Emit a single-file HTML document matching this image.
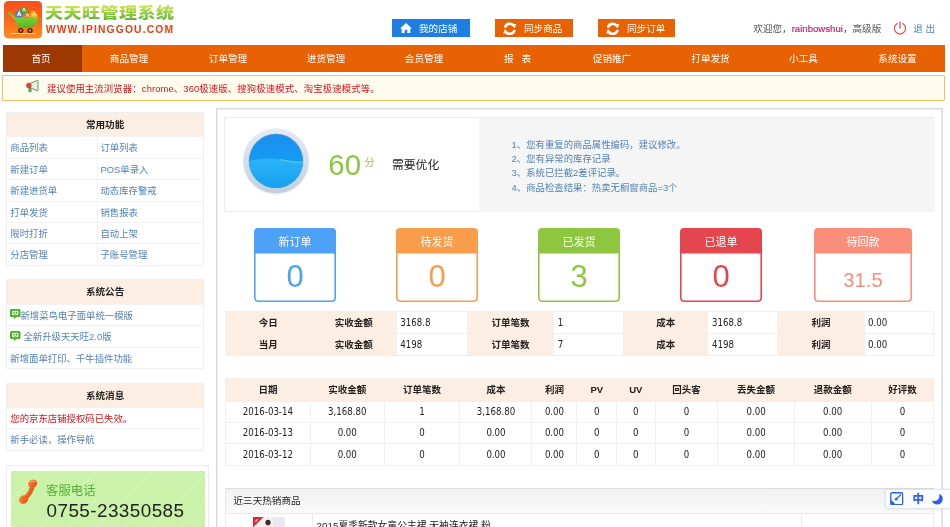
<!DOCTYPE html>
<html lang="zh-CN">
<head>
<meta charset="utf-8">
<title>天天旺管理系统</title>
<style>
*{box-sizing:border-box;margin:0;padding:0}
html,body{width:950px;height:527px;overflow:hidden;background:#fff}
body{position:relative;will-change:transform;font-family:"Liberation Sans","Noto Sans CJK SC",sans-serif;font-size:9.4px;color:#333;line-height:1}
.abs{position:absolute}
a{text-decoration:none;color:inherit}
/* header */
#logo{left:4px;top:1px}
#t1{left:45.3px;top:4px;font-size:15px;font-weight:900;color:#7cc242;letter-spacing:0.4px;transform:scaleX(1.2);transform-origin:0 0;white-space:nowrap;line-height:18px;background:linear-gradient(#c4e552 15%,#5ab52a 90%);-webkit-background-clip:text;background-clip:text;-webkit-text-fill-color:transparent}
#t2{left:45.8px;top:24.3px;font-size:10.3px;font-weight:bold;color:#ee3d10;letter-spacing:1.16px;white-space:nowrap;line-height:12px}
.btn{top:19px;height:18px;color:#fff;font-size:9.6px;line-height:19.2px;overflow:hidden;white-space:nowrap}
.btn svg{position:absolute}
.btn span{position:absolute;top:0}
#b1{left:392px;width:78px;background:#1c7ee0}
#b2{left:495px;width:77.6px;background:#e86203}
#b3{left:598px;width:77.4px;background:#e86203}
#user{left:753.3px;top:23px;font-size:9.6px;line-height:12px;color:#555;white-space:nowrap;letter-spacing:0}
#user b{font-weight:normal;color:#c8246c;-webkit-text-stroke:0.2px #c8246c}
#exit{left:913.2px;top:23px;font-size:9.6px;line-height:12px;color:#4a86b8;white-space:nowrap;letter-spacing:0}
/* nav */
#nav{left:3px;top:45.4px;width:942px;height:26.6px;background:#e86203}
#nav .on{position:absolute;left:0;top:0;width:78.5px;height:27px;background:#9d3803}
#nav span{position:absolute;top:0;height:27px;line-height:28px;color:#fff;font-size:9.6px;white-space:nowrap;transform:translateX(-50%)}
#notice{left:2.3px;top:74.8px;width:943px;height:26.2px;background:#fffcee;border:1.5px solid #ecc35f;border-radius:1px}
#notice span{position:absolute;left:43.6px;top:0;line-height:25.6px;letter-spacing:0.12px;font-size:9.4px;color:#d8141c;white-space:nowrap}
/* sidebar */
.sb{left:5.8px;width:198.6px;border:1px solid #efefef;background:#fff}
.sb .h{height:23.4px;line-height:23.6px;background:#fdeee3;text-align:center;font-weight:bold;color:#222;font-size:9.6px}
.sb .r{height:21.4px;line-height:21.6px;border-top:1px solid #f2f2f2;color:#5383b6;white-space:nowrap;position:relative}
.sb .r span{position:absolute;top:0;left:3.5px}
.sb .r i+span{left:93.7px}
.sb .r i{position:absolute;left:90.2px;top:0;width:1px;height:100%;background:#f0f0f0}

/* main */
#main{left:216px;top:108px;width:726.8px;height:440px;box-shadow:inset 0 0 0 1.6px #dbdbdb;background:#fff}
#score{left:224.4px;top:117.3px;width:710.3px;height:94.6px;border:1px solid #ebebeb;background:#fff}
#tips{left:479px;top:117.6px;width:455.5px;height:94.2px;background:#f5f5f5}
#tips p{position:absolute;left:32.6px;white-space:nowrap;color:#5383b6;font-size:9.4px;line-height:14px}
#ball{left:242px;top:128px;width:68px;height:68px}
#n60{left:328.3px;top:147.5px;font-size:29.4px;line-height:34px;color:#8cc63f;white-space:nowrap}
#fen{left:364.5px;top:156px;font-size:10px;line-height:14px;color:#8cc63f}
#need{left:392px;top:158px;font-size:11.8px;line-height:14px;color:#222;white-space:nowrap}
.card{top:228px;width:82px;height:74.3px;border-radius:4px;overflow:hidden;background:#fff}
.card .ch{position:absolute;left:0;top:0;width:100%;height:24.5px;line-height:29.6px;overflow:hidden;text-align:center;color:#fff;font-size:11px}
.card .cb{position:absolute;left:0;top:24px;width:100%;bottom:0;border-radius:0 0 4px 4px;text-align:center;font-size:31px;line-height:50px}

/* tables */
.tb{border-collapse:collapse;table-layout:fixed;font-size:9.8px;color:#222}
.tb th,.tb .l{font-size:9.5px}
.tb td{font-family:"DejaVu Sans Condensed","DejaVu Sans","Liberation Sans","Noto Sans CJK SC",sans-serif;font-stretch:condensed;font-size:9.6px}
.tb td.l{font-family:"Liberation Sans","Noto Sans CJK SC",sans-serif;font-stretch:normal;font-size:9.5px}
.tb td,.tb th{border:1px solid #f0f0f0;padding:0;overflow:hidden;white-space:nowrap;font-weight:normal}
#t_a{left:224.7px;top:311px;width:708.6px}
#t_a td{height:21.7px;line-height:21px}
#t_a .l{background:#fdeee3;text-align:center;font-weight:bold}
#t_a .v{padding-left:3.5px;text-align:left}
#t_b{left:225px;top:377.5px;width:708.5px}
#t_b th{height:23.3px;background:#fdeee3;font-weight:bold;text-align:center;line-height:22px}
#t_b td{height:21.3px;text-align:center;line-height:20px}
#hot{left:225px;top:488px;width:708.7px;height:26px;border:1px solid #e9e9e9;border-top-color:#dedede;background:linear-gradient(#f2f2f2,#f5f5f5 35%,#fafafa)}
#hot span{position:absolute;left:7.5px;top:0;line-height:24px;font-size:9.6px;color:#222;white-space:nowrap}
#hotrow{left:225px;top:513.5px;width:708.7px;height:20px;border:1px solid #ececec;border-top:0;background:#fff}
#hotrow i{position:absolute;top:0;width:1px;height:100%;background:#ececec}
#hotname{left:316.6px;top:520px;font-size:9.8px;line-height:12px;color:#222;white-space:nowrap}
/* service */
#svc{left:6.3px;top:464.6px;width:202.6px;height:70px;border:1px solid #ececec;background:#fff}
#svcin{left:10.5px;top:471.4px;width:194.5px;height:60px;background:repeating-linear-gradient(135deg,#c6f0a2 0,#c6f0a2 1.4px,#d2f4b4 1.4px,#d2f4b4 2.2px)}
#svct{left:46px;top:483.5px;font-size:12.4px;line-height:14px;color:#4fb434;white-space:nowrap}
#svcn{left:46.6px;top:500.3px;font-size:18.9px;line-height:22px;color:#222;white-space:nowrap;letter-spacing:0.42px}
#ime{left:885px;top:488.5px;width:70px;height:20px;background:#fff;border:1px solid #dfe6f0;border-radius:3px;box-shadow:0 0 2px rgba(120,140,170,.35)}
</style>
</head>
<body>
<!-- HEADER -->
<svg class="abs" id="logo" viewBox="0 0 38 37.5" width="38" height="37.5">
<defs><linearGradient id="lg" x1="0" y1="0" x2="0" y2="1"><stop offset="0" stop-color="#fb4d1b"/><stop offset="0.55" stop-color="#fc6a1c"/><stop offset="1" stop-color="#fd8d20"/></linearGradient>
<linearGradient id="cg" x1="0" y1="0" x2="0" y2="1"><stop offset="0" stop-color="#8bdc3c"/><stop offset="1" stop-color="#55b427"/></linearGradient></defs>
<rect x="0" y="0" width="38" height="37.5" rx="4.5" fill="url(#lg)"/>
<path d="M4.6 12.2 Q6.5 11.2 7.8 13 L10.5 16.3 L34 16 Q34.2 21 30.5 24.5 Q28.5 26.6 25 27 L15.5 27 Q12.5 24 10.3 18.6 L6.6 14 Z" fill="url(#cg)"/>
<circle cx="5.6" cy="12.6" r="1.7" fill="#6cc62f"/>
<circle cx="15.2" cy="13.2" r="3.6" fill="#2f86e6"/>
<path d="M13.4 15 L15.2 10.8 L17 15 M14 13.8 L16.4 13.8" stroke="#fff" stroke-width="1.1" fill="none"/>
<path d="M15.6 8.2 L20 5.6 L24 8.4 L22.6 12 L18 12 Z" fill="#44b035"/>
<path d="M18.6 10.4 L20 7.2 L21.4 10.4" stroke="#fff" stroke-width="1" fill="none"/>
<rect x="20.6" y="12" width="6.2" height="4.8" rx="1" fill="#fb6a1f"/>
<path d="M22 15.8 L23.6 12.6 L25.2 15.8" stroke="#fff" stroke-width="1" fill="none"/>
<path d="M26.6 16.4 Q25.6 10 29 9.6 Q33 11 33.6 16.2 Z" fill="#fdb913"/>
<path d="M28.6 14.6 L30 11.6 L31.6 14.6" stroke="#fff5c8" stroke-width="0.9" fill="none"/>
<circle cx="16.8" cy="29.6" r="2.7" fill="#5a2310"/><circle cx="16.8" cy="29.6" r="1.1" fill="#f39a3c"/>
<circle cx="26" cy="29.6" r="2.7" fill="#5a2310"/><circle cx="26" cy="29.6" r="1.1" fill="#f39a3c"/>
<rect x="5.5" y="32" width="26.5" height="0.9" rx="0.4" fill="#ffd9a8" opacity="0.9"/>
</svg>
<div class="abs" id="t1">天天旺管理系统</div>
<div class="abs" id="t2">WWW.IPINGGOU.COM</div>
<div class="abs btn" id="b1"><svg style="left:7.8px;top:3.6px" width="12" height="10.5" viewBox="0 0 23 20"><path d="M11.5 0 L23 10.5 L19.8 10.5 L19.8 20 L14 20 L14 13 L9 13 L9 20 L3.2 20 L3.2 10.5 L0 10.5 Z" fill="#fff"/></svg><span style="left:27px">我的店铺</span></div>
<div class="abs btn" id="b2"><svg style="left:8px;top:2.6px" width="13.6" height="13.6" viewBox="0 0 24 24"><g transform="translate(24,0) scale(-1,1)"><path d="M20.5 10 A9 9 0 0 0 4.6 6.6" stroke="#fff" stroke-width="4.6" fill="none"/><path d="M0.5 3.5 L9.5 4.5 L3.4 11.6 Z" fill="#fff"/><path d="M3.5 14 A9 9 0 0 0 19.4 17.4" stroke="#fff" stroke-width="4.6" fill="none"/><path d="M23.5 20.5 L14.5 19.5 L20.6 12.4 Z" fill="#fff"/></g></svg><span style="left:29px">同步商品</span></div>
<div class="abs btn" id="b3"><svg style="left:8px;top:2.6px" width="13.6" height="13.6" viewBox="0 0 24 24"><g transform="translate(24,0) scale(-1,1)"><path d="M20.5 10 A9 9 0 0 0 4.6 6.6" stroke="#fff" stroke-width="4.6" fill="none"/><path d="M0.5 3.5 L9.5 4.5 L3.4 11.6 Z" fill="#fff"/><path d="M3.5 14 A9 9 0 0 0 19.4 17.4" stroke="#fff" stroke-width="4.6" fill="none"/><path d="M23.5 20.5 L14.5 19.5 L20.6 12.4 Z" fill="#fff"/></g></svg><span style="left:29px">同步订单</span></div>
<div class="abs" id="user">欢迎您，<b>rainbowshui</b>，高级版</div>
<svg class="abs" style="left:893px;top:21px" width="14" height="14" viewBox="0 0 14 14"><path d="M4.3 2.5 A5.6 5.6 0 1 0 9.7 2.5" stroke="#e0525c" stroke-width="1.25" fill="none" stroke-linecap="round"/><path d="M7 0.8 L7 7.2" stroke="#e0525c" stroke-width="1.3" stroke-linecap="round"/></svg>
<div class="abs" id="exit">退 出</div>
<!-- NAV -->
<div class="abs" id="nav"><div class="on"></div>
<span style="left:38px">首页</span><span style="left:126px">商品管理</span><span style="left:225px">订单管理</span><span style="left:323px">进货管理</span><span style="left:421px">会员管理</span><span style="left:514.5px">报&nbsp;&nbsp;&nbsp;表</span><span style="left:609px">促销推广</span><span style="left:707.5px">打单发货</span><span style="left:800.5px">小工具</span><span style="left:894.5px">系统设置</span>
</div>
<div class="abs" id="notice"><span>建议使用主流浏览器：chrome、360极速版、搜狗极速模式、淘宝极速模式等。</span></div>
<svg class="abs" style="left:26px;top:79.5px" width="13" height="13" viewBox="0 0 13 13"><path d="M4 3.6 L11 0.6 Q12 0.4 12 1.4 L12 10 Q12 11 11 10.6 L4 7.8 Z" fill="#e9eee6" stroke="#5f9a5a" stroke-width="1"/><rect x="2.4" y="7.4" width="3.2" height="4.8" rx="0.8" fill="#5fa45c"/><circle cx="2.9" cy="5.4" r="2.7" fill="#ea3b35"/></svg>
<!-- SIDEBAR -->
<div class="abs sb" style="top:112px">
<div class="h">常用功能</div>
<div class="r"><span>商品列表</span><i></i><span>订单列表</span></div>
<div class="r"><span>新建订单</span><i></i><span>POS单录入</span></div>
<div class="r"><span>新建进货单</span><i></i><span>动态库存警戒</span></div>
<div class="r"><span>打单发货</span><i></i><span>销售报表</span></div>
<div class="r"><span>限时打折</span><i></i><span>自动上架</span></div>
<div class="r"><span>分店管理</span><i></i><span>子账号管理</span></div>
</div>
<div class="abs sb" style="top:279.4px">
<div class="h">系统公告</div>
<div class="r"><svg style="position:absolute;left:3.5px;top:4.5px" width="10.5" height="11" viewBox="0 0 21 22"><path d="M3 0 H18 Q21 0 21 3 V13 Q21 16 18 16 H12 L8 21 L8 16 H3 Q0 16 0 13 V3 Q0 0 3 0Z" fill="#4bb024"/><rect x="4" y="3.5" width="13" height="9" rx="2" fill="#dff3c8"/><circle cx="8" cy="7" r="1.3" fill="#3c9a1c"/><circle cx="13" cy="7" r="1.3" fill="#3c9a1c"/><path d="M7 9.6 Q10.5 12 14 9.6" stroke="#3c9a1c" stroke-width="1.2" fill="none"/></svg><span style="left:13.7px">新增菜鸟电子面单统一模版</span></div>
<div class="r"><svg style="position:absolute;left:3.5px;top:4.5px" width="10.5" height="11" viewBox="0 0 21 22"><path d="M3 0 H18 Q21 0 21 3 V13 Q21 16 18 16 H12 L8 21 L8 16 H3 Q0 16 0 13 V3 Q0 0 3 0Z" fill="#4bb024"/><rect x="4" y="3.5" width="13" height="9" rx="2" fill="#dff3c8"/><circle cx="8" cy="7" r="1.3" fill="#3c9a1c"/><circle cx="13" cy="7" r="1.3" fill="#3c9a1c"/><path d="M7 9.6 Q10.5 12 14 9.6" stroke="#3c9a1c" stroke-width="1.2" fill="none"/></svg><span style="left:16.7px">全新升级天天旺2.0版</span></div>
<div class="r"><span>新增面单打印、千牛插件功能</span></div>
</div>
<div class="abs sb" style="top:382.6px">
<div class="h">系统消息</div>
<div class="r"><span style="color:#d8141c">您的京东店铺授权码已失效。</span></div>
<div class="r"><span>新手必读，操作导航</span></div>
</div>
<!-- MAIN -->
<div class="abs" id="main"></div>
<div class="abs" id="score"></div>
<div class="abs" id="tips">
<p style="top:20.4px">1、您有重复的商品属性编码，建议修改。</p>
<p style="top:34.6px">2、您有异常的库存记录</p>
<p style="top:48.8px">3、系统已拦截2差评记录。</p>
<p style="top:63.0px">4、商品检查结果：热卖无橱窗商品=3个</p>
</div>
<svg class="abs" style="left:242.2px;top:127px" width="68" height="68" viewBox="0 0 68 68">
<defs>
<linearGradient id="rg" x1="0" y1="0" x2="0" y2="1"><stop offset="0" stop-color="#e6ebf2"/><stop offset="0.5" stop-color="#d6deea"/><stop offset="1" stop-color="#c3cedd"/></linearGradient>
<linearGradient id="bt" x1="0" y1="0" x2="0" y2="1"><stop offset="0" stop-color="#1d8ce8"/><stop offset="0.5" stop-color="#149bf6"/><stop offset="1" stop-color="#149bf6"/></linearGradient>
<linearGradient id="bb" x1="0" y1="0" x2="0" y2="1"><stop offset="0" stop-color="#2cb3f5"/><stop offset="0.5" stop-color="#1fa8f2"/><stop offset="1" stop-color="#1798ea"/></linearGradient>
<clipPath id="cp"><circle cx="34" cy="34" r="27"/></clipPath>
<filter id="bl" x="-20%" y="-20%" width="140%" height="140%"><feGaussianBlur stdDeviation="0.6"/></filter>
</defs>
<circle cx="34" cy="34.6" r="33.4" fill="#eef1f6"/>
<circle cx="34" cy="34" r="32.6" fill="url(#rg)"/>
<circle cx="34" cy="34" r="27.6" fill="#b4c4d8"/>
<g clip-path="url(#cp)">
<rect x="0" y="0" width="68" height="68" fill="url(#bt)"/>
<path d="M5 34.6 Q22 29.5 38 32.5 Q52 35.5 63 35 L63 68 L5 68Z" fill="url(#bb)" filter="url(#bl)"/>
<path d="M38 32.6 Q52 35.6 62 35.2" stroke="#5fd0fa" stroke-width="1.4" fill="none" opacity="0.8" filter="url(#bl)"/>
</g>
</svg>
<div class="abs" id="n60">60</div>
<div class="abs" id="fen">分</div>
<div class="abs" id="need">需要优化</div>
<div class="abs card" style="left:254px"><div class="ch" style="background:#4da1f7">新订单</div><div class="cb" style="box-shadow:inset 0 0 0 1.6px #4da1f7;color:#4da1f7">0</div></div>
<div class="abs card" style="left:396px"><div class="ch" style="background:#f99d4b">待发货</div><div class="cb" style="box-shadow:inset 0 0 0 1.6px #f99d4b;color:#f99d4b">0</div></div>
<div class="abs card" style="left:538px"><div class="ch" style="background:#8ec63f">已发货</div><div class="cb" style="box-shadow:inset 0 0 0 1.6px #8ec63f;color:#8ec63f">3</div></div>
<div class="abs card" style="left:680px"><div class="ch" style="background:#e5454c">已退单</div><div class="cb" style="box-shadow:inset 0 0 0 1.6px #e5454c;color:#e5454c">0</div></div>
<div class="abs card" style="left:814px;width:98px"><div class="ch" style="background:#fb8e7b">待回款</div><div class="cb" style="box-shadow:inset 0 0 0 1.6px #fb8e7b;color:#fb8e7b;font-size:20.2px;line-height:56.5px">31.5</div></div>
<table class="abs tb" id="t_a">
<colgroup><col style="width:86px"><col style="width:85px"><col style="width:71px"><col style="width:86.5px"><col style="width:69.9px"><col style="width:84.4px"><col style="width:69.9px"><col style="width:86.2px"><col style="width:69.8px"></colgroup>
<tr><td class="l">今日</td><td class="l">实收金额</td><td class="v">3168.8</td><td class="l">订单笔数</td><td class="v">1</td><td class="l">成本</td><td class="v">3168.8</td><td class="l">利润</td><td class="v">0.00</td></tr>
<tr><td class="l">当月</td><td class="l">实收金额</td><td class="v">4198</td><td class="l">订单笔数</td><td class="v">7</td><td class="l">成本</td><td class="v">4198</td><td class="l">利润</td><td class="v">0.00</td></tr>
</table>
<table class="abs tb" id="t_b">
<colgroup><col style="width:84.8px"><col style="width:73.9px"><col style="width:75.8px"><col style="width:72.0px"><col style="width:45.0px"><col style="width:39.5px"><col style="width:38.7px"><col style="width:62.6px"><col style="width:76.5px"><col style="width:76.9px"><col style="width:62.8px"></colgroup>
<tr><th>日期</th><th>实收金额</th><th>订单笔数</th><th>成本</th><th>利润</th><th>PV</th><th>UV</th><th>回头客</th><th>丢失金额</th><th>退款金额</th><th>好评数</th></tr>
<tr><td>2016-03-14</td><td>3,168.80</td><td>1</td><td>3,168.80</td><td>0.00</td><td>0</td><td>0</td><td>0</td><td>0.00</td><td>0.00</td><td>0</td></tr>
<tr><td>2016-03-13</td><td>0.00</td><td>0</td><td>0.00</td><td>0.00</td><td>0</td><td>0</td><td>0</td><td>0.00</td><td>0.00</td><td>0</td></tr>
<tr><td>2016-03-12</td><td>0.00</td><td>0</td><td>0.00</td><td>0.00</td><td>0</td><td>0</td><td>0</td><td>0.00</td><td>0.00</td><td>0</td></tr>
</table>
<div class="abs" id="hot"><span>近三天热销商品</span></div>
<div class="abs" id="hotrow"><i style="left:85.8px"></i><i style="left:574.6px"></i></div>
<svg class="abs" style="left:252.8px;top:516.5px" width="32" height="12" viewBox="0 0 32 12"><rect width="32" height="12" fill="#f6f0f6"/><rect x="20" width="12" height="12" fill="#ece6f2"/><path d="M0 0 H10.5 L0 10.5Z" fill="#e8262d"/><path d="M2.4 4.6 l2.2 -2.2" stroke="#fff" stroke-width="1.1"/><ellipse cx="15" cy="5.6" rx="2.6" ry="2.8" fill="#3a2a26"/><path d="M11.6 12 Q12 8.2 15 8.2 Q18 8.2 18.6 12Z" fill="#f3d9cf"/></svg>
<div class="abs" id="hotname">2015夏季新款女童公主裙 无袖连衣裙 粉</div>
<!-- SERVICE -->
<div class="abs" id="svc"></div>
<div class="abs" id="svcin"></div>
<svg class="abs" style="left:17.5px;top:479px" width="21" height="26" viewBox="0 0 21 26">
<defs><linearGradient id="pg" x1="0" y1="0" x2="1" y2="1"><stop offset="0" stop-color="#ff8c3c"/><stop offset="1" stop-color="#dc4a10"/></linearGradient></defs>
<path d="M14 4 Q15.5 13 5.5 20.5" stroke="url(#pg)" stroke-width="4.6" fill="none" stroke-linecap="round"/>
<ellipse cx="14.6" cy="4.6" rx="4.6" ry="4" transform="rotate(-25 14.6 4.6)" fill="url(#pg)"/>
<ellipse cx="5.6" cy="20.6" rx="4.8" ry="4" transform="rotate(-35 5.6 20.6)" fill="url(#pg)"/>
<path d="M12.4 2.6 Q14.6 1.4 16.6 2.6" stroke="#ffc494" stroke-width="1" fill="none" stroke-linecap="round"/>
</svg>
<div class="abs" id="svct">客服电话</div>
<div class="abs" id="svcn">0755-23350585</div>
<div class="abs" id="ime"><svg style="position:absolute;left:4.2px;top:2.6px" width="13.4" height="13.4" viewBox="0 0 27 27"><rect x="1.5" y="1.5" width="24" height="24" rx="2.5" fill="#f4f8ff" stroke="#2a63ea" stroke-width="2.6"/><path d="M1.5 15 L12 25.5 H1.5Z" fill="#2a63ea"/><circle cx="12.5" cy="14.5" r="2.8" fill="#2a63ea"/><path d="M12.5 14.5 L21.5 5.5" stroke="#2a63ea" stroke-width="2.4" stroke-linecap="round"/></svg><span style="position:absolute;left:26.4px;top:2.4px;font-size:11.6px;line-height:14px;font-weight:900;color:#2a63ea">中</span><svg style="position:absolute;left:45.4px;top:3.6px" width="12" height="12" viewBox="0 0 24 24"><defs><mask id="mm"><rect width="24" height="24" fill="#000"/><circle cx="12.5" cy="12" r="11.2" fill="#fff"/><circle cx="6.2" cy="5.4" r="10.6" fill="#000"/></mask></defs><rect width="24" height="24" fill="#2a63ea" mask="url(#mm)"/></svg></div>
</body>
</html>
